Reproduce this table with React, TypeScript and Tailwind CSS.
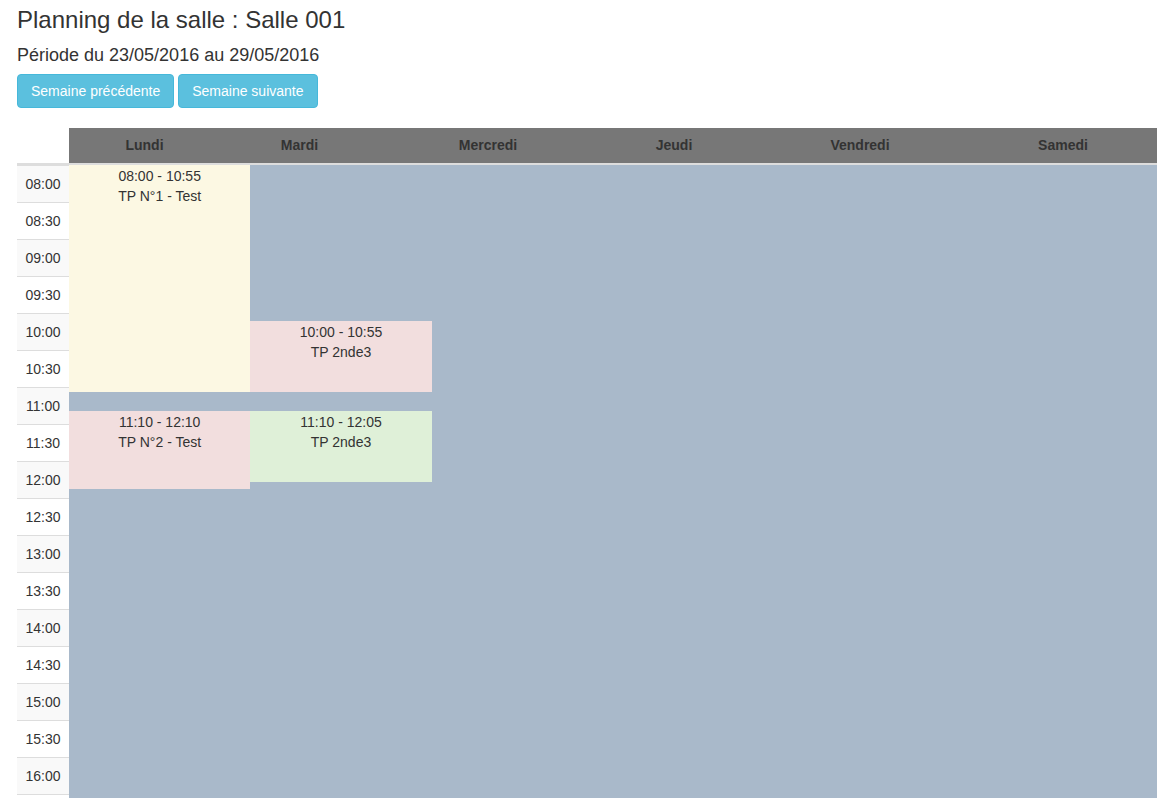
import React from 'react';

type Slot = {
  day: number;
  top: number;
  height: number;
  hours: string;
  label: string;
  color: string;
};

const days = ['Lundi', 'Mardi', 'Mercredi', 'Jeudi', 'Vendredi', 'Samedi'];

const headWidths = [
  'w-[151px]',
  'w-[159px]',
  'w-[218px]',
  'w-[154px]',
  'w-[218px]',
  'flex-1',
];

const times: string[] = [];
for (let h = 8; h <= 16; h++) {
  const hh = h < 10 ? `0${h}` : `${h}`;
  times.push(`${hh}:00`);
  if (h < 16) times.push(`${hh}:30`);
}

const slots: Slot[] = [
  { day: 0, top: 0, height: 227, hours: '08:00 - 10:55', label: 'TP N°1 - Test', color: 'bg-[#fcf8e3]' },
  { day: 1, top: 156, height: 71, hours: '10:00 - 10:55', label: 'TP 2nde3', color: 'bg-[#f2dede]' },
  { day: 0, top: 246, height: 78, hours: '11:10 - 12:10', label: 'TP N°2 - Test', color: 'bg-[#f2dede]' },
  { day: 1, top: 246, height: 71, hours: '11:10 - 12:05', label: 'TP 2nde3', color: 'bg-[#dff0d8]' },
];

const App: React.FC = () => {
  return (
    <div className="min-h-screen bg-white px-[17px] pt-[7px] text-[#333] font-['Liberation_Sans',Arial,sans-serif]">
      <h3 className="text-[24px] leading-[26px]">Planning de la salle : Salle 001</h3>
      <h4 className="mt-[12px] text-[18px] leading-[20px]">Période du 23/05/2016 au 29/05/2016</h4>

      <div className="mt-[9px] flex gap-[4px]">
        <button className="h-[34px] rounded-[4px] border border-[#46b8da] bg-[#5bc0de] px-[13px] text-[14px] text-white">
          Semaine précédente
        </button>
        <button className="h-[34px] rounded-[4px] border border-[#46b8da] bg-[#5bc0de] px-[13px] text-[14px] text-white">
          Semaine suivante
        </button>
      </div>

      <div className="mt-[20px] w-[1140px]">
        {/* thead */}
        <div className="flex h-[37px] border-b-2 border-[#ddd]">
          <div className="w-[52px] bg-white" />
          {days.map((d, i) => (
            <div
              key={d}
              className={`${headWidths[i]} flex items-center justify-center bg-[#777] text-[14px] font-bold text-[#333]`}
            >
              {d}
            </div>
          ))}
        </div>

        {/* tbody */}
        <div className="flex">
          <div className="w-[52px]">
            {times.map((t, i) => (
              <div
                key={t}
                className={`flex h-[37px] items-center justify-center border-t border-[#ddd] text-[14px] ${
                  i % 2 === 0 ? 'bg-[#f9f9f9]' : 'bg-white'
                }`}
              >
                {t}
              </div>
            ))}
            <div className="h-[37px] border-t border-[#ddd] bg-white" />
          </div>

          <div className="grid flex-1 grid-cols-6 bg-[#a9b9ca]">
            {days.map((d, i) => (
              <div key={d} className="relative">
                {slots
                  .filter((s) => s.day === i)
                  .map((s) => (
                    <div
                      key={s.hours}
                      className={`absolute inset-x-0 ${s.color} pt-px text-center text-[14px] leading-[20px] text-[#333]`}
                      style={{ top: s.top, height: s.height }}
                    >
                      <div>{s.hours}</div>
                      <div>{s.label}</div>
                    </div>
                  ))}
              </div>
            ))}
          </div>
        </div>
      </div>
    </div>
  );
};

export default App;
